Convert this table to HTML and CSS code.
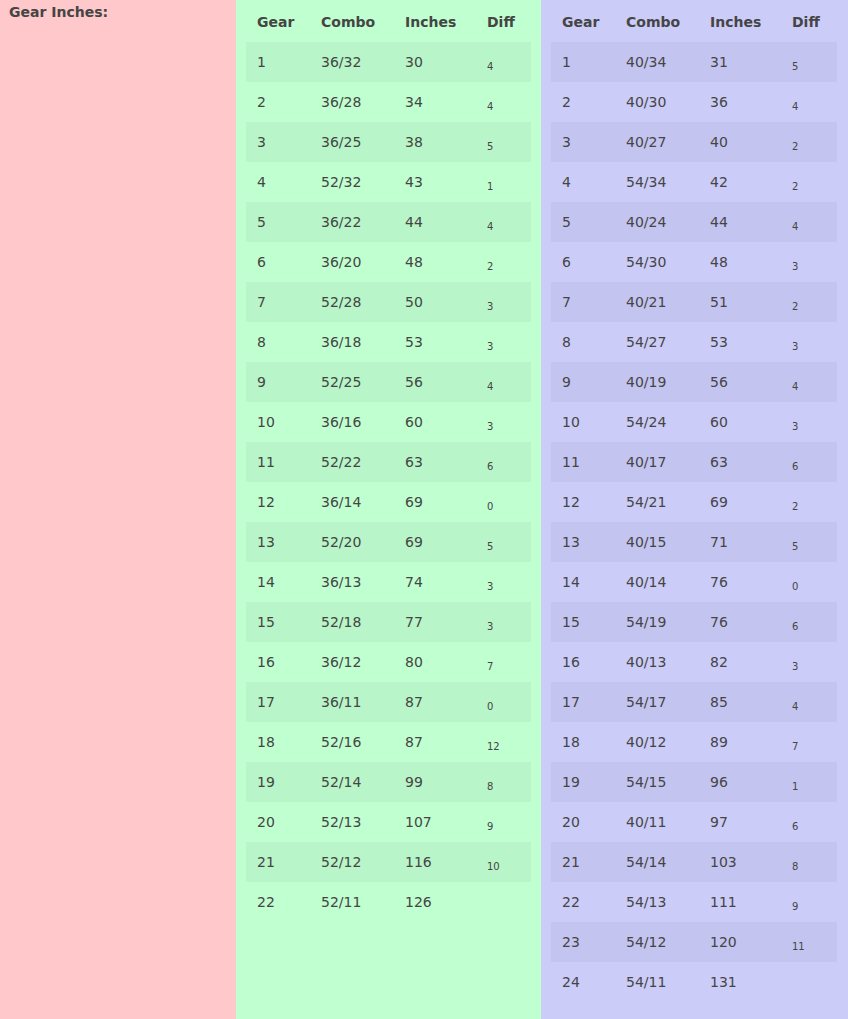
FILE: index.html
```html
<!DOCTYPE html>
<html>
<head>
<meta charset="utf-8">
<link rel="stylesheet" href="styles.css">
</head>
<body>
<div class="page">
  <div class="col col-label">
    <h1 class="title">Gear Inches:</h1>
  </div>
  <div class="col col-green">
    <table class="gears">
      <thead><tr><th class="c-gear">Gear</th><th class="c-combo">Combo</th><th class="c-in">Inches</th><th class="c-diff">Diff</th></tr></thead>
      <tbody>
        <tr><td>1</td><td>36/32</td><td>30</td><td class="diff">4</td></tr>
        <tr><td>2</td><td>36/28</td><td>34</td><td class="diff">4</td></tr>
        <tr><td>3</td><td>36/25</td><td>38</td><td class="diff">5</td></tr>
        <tr><td>4</td><td>52/32</td><td>43</td><td class="diff">1</td></tr>
        <tr><td>5</td><td>36/22</td><td>44</td><td class="diff">4</td></tr>
        <tr><td>6</td><td>36/20</td><td>48</td><td class="diff">2</td></tr>
        <tr><td>7</td><td>52/28</td><td>50</td><td class="diff">3</td></tr>
        <tr><td>8</td><td>36/18</td><td>53</td><td class="diff">3</td></tr>
        <tr><td>9</td><td>52/25</td><td>56</td><td class="diff">4</td></tr>
        <tr><td>10</td><td>36/16</td><td>60</td><td class="diff">3</td></tr>
        <tr><td>11</td><td>52/22</td><td>63</td><td class="diff">6</td></tr>
        <tr><td>12</td><td>36/14</td><td>69</td><td class="diff">0</td></tr>
        <tr><td>13</td><td>52/20</td><td>69</td><td class="diff">5</td></tr>
        <tr><td>14</td><td>36/13</td><td>74</td><td class="diff">3</td></tr>
        <tr><td>15</td><td>52/18</td><td>77</td><td class="diff">3</td></tr>
        <tr><td>16</td><td>36/12</td><td>80</td><td class="diff">7</td></tr>
        <tr><td>17</td><td>36/11</td><td>87</td><td class="diff">0</td></tr>
        <tr><td>18</td><td>52/16</td><td>87</td><td class="diff">12</td></tr>
        <tr><td>19</td><td>52/14</td><td>99</td><td class="diff">8</td></tr>
        <tr><td>20</td><td>52/13</td><td>107</td><td class="diff">9</td></tr>
        <tr><td>21</td><td>52/12</td><td>116</td><td class="diff">10</td></tr>
        <tr><td>22</td><td>52/11</td><td>126</td><td class="diff"></td></tr>
      </tbody>
    </table>
  </div>
  <div class="col col-blue">
    <table class="gears">
      <thead><tr><th class="c-gear">Gear</th><th class="c-combo">Combo</th><th class="c-in">Inches</th><th class="c-diff">Diff</th></tr></thead>
      <tbody>
        <tr><td>1</td><td>40/34</td><td>31</td><td class="diff">5</td></tr>
        <tr><td>2</td><td>40/30</td><td>36</td><td class="diff">4</td></tr>
        <tr><td>3</td><td>40/27</td><td>40</td><td class="diff">2</td></tr>
        <tr><td>4</td><td>54/34</td><td>42</td><td class="diff">2</td></tr>
        <tr><td>5</td><td>40/24</td><td>44</td><td class="diff">4</td></tr>
        <tr><td>6</td><td>54/30</td><td>48</td><td class="diff">3</td></tr>
        <tr><td>7</td><td>40/21</td><td>51</td><td class="diff">2</td></tr>
        <tr><td>8</td><td>54/27</td><td>53</td><td class="diff">3</td></tr>
        <tr><td>9</td><td>40/19</td><td>56</td><td class="diff">4</td></tr>
        <tr><td>10</td><td>54/24</td><td>60</td><td class="diff">3</td></tr>
        <tr><td>11</td><td>40/17</td><td>63</td><td class="diff">6</td></tr>
        <tr><td>12</td><td>54/21</td><td>69</td><td class="diff">2</td></tr>
        <tr><td>13</td><td>40/15</td><td>71</td><td class="diff">5</td></tr>
        <tr><td>14</td><td>40/14</td><td>76</td><td class="diff">0</td></tr>
        <tr><td>15</td><td>54/19</td><td>76</td><td class="diff">6</td></tr>
        <tr><td>16</td><td>40/13</td><td>82</td><td class="diff">3</td></tr>
        <tr><td>17</td><td>54/17</td><td>85</td><td class="diff">4</td></tr>
        <tr><td>18</td><td>40/12</td><td>89</td><td class="diff">7</td></tr>
        <tr><td>19</td><td>54/15</td><td>96</td><td class="diff">1</td></tr>
        <tr><td>20</td><td>40/11</td><td>97</td><td class="diff">6</td></tr>
        <tr><td>21</td><td>54/14</td><td>103</td><td class="diff">8</td></tr>
        <tr><td>22</td><td>54/13</td><td>111</td><td class="diff">9</td></tr>
        <tr><td>23</td><td>54/12</td><td>120</td><td class="diff">11</td></tr>
        <tr><td>24</td><td>54/11</td><td>131</td><td class="diff"></td></tr>
      </tbody>
    </table>
  </div>
</div>
</body>
</html>
```
FILE: styles.css
```css
html, body {
  margin: 0;
  padding: 0;
}
body {
  font-family: "DejaVu Sans", Verdana, sans-serif;
  color: #454545;
  font-size: 14px;
}
.page {
  display: flex;
  min-height: 100vh;
}
.col {
  box-sizing: border-box;
}
.col-label {
  width: 236px;
  flex: none;
  background: #ffc8ca;
  padding: 4px 9px;
}
.title {
  margin: 0;
  font-size: 14px;
  font-weight: bold;
  line-height: 16px;
}
.col-green {
  width: 305px;
  flex: none;
  background: #c0ffd0;
  padding: 2px 10px 0;
}
.col-blue {
  flex: 1;
  background: #ccccf8;
  padding: 2px 11px 0 10px;
}
.gears {
  width: 100%;
  border-collapse: collapse;
  border-spacing: 0;
}
.gears th,
.gears td {
  height: 40px;
  padding: 0 0 0 11px;
  text-align: left;
  vertical-align: middle;
  box-sizing: border-box;
}
.gears th {
  font-weight: bold;
}
.c-gear { width: 64px; }
.c-combo { width: 84px; }
.c-in { width: 82px; }
.gears td.diff {
  font-size: 10px;
  padding-top: 8px;
}
.col-green tbody tr:nth-child(odd) {
  background: #b8f5c8;
}
.col-blue tbody tr:nth-child(odd) {
  background: #c4c4f0;
}
```
